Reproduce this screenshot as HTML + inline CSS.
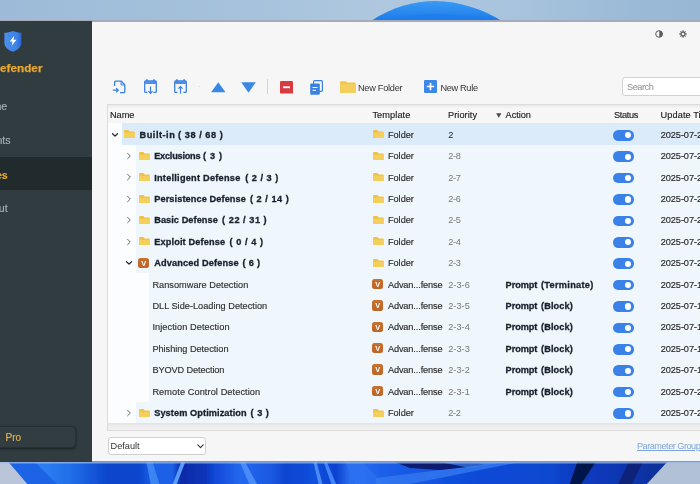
<!DOCTYPE html>
<html><head><meta charset="utf-8"><title>Defender Rules</title>
<style>
*{box-sizing:border-box;margin:0;padding:0}
html,body{width:700px;height:484px;overflow:hidden}
body{position:relative;font-family:"Liberation Sans",sans-serif;font-size:9.2px;color:#333;background:#a8c2da}
#wall{position:absolute;left:0;top:0;width:700px;height:484px}
#app{position:absolute;left:0;top:0;width:700px;height:484px;overflow:hidden;will-change:transform}
#win{position:absolute;left:-2px;top:19.5px;width:710px;height:442.3px;background:#f6f6f6;border-top:2px solid #a6abb9;border-bottom:1px solid #8a96a8}
#side{position:absolute;left:0;top:21px;width:91.5px;height:440.5px;background:#313c40}
.brand{position:absolute;right:49px;top:40.1px;-webkit-text-stroke:0.25px #e8a92e;font-size:11.7px;font-weight:bold;color:#e8a92e;letter-spacing:0.05px;white-space:nowrap}
.nav{position:absolute;left:0;width:91.5px;height:33px;color:#a9b2b5;font-size:10.6px;white-space:nowrap}
.nav span{position:absolute;right:84px;top:11.6px;-webkit-text-stroke:0.15px currentColor}
.nav.on{background:#212a2d;color:#e8a92e;font-weight:bold}
.pro{position:absolute;left:-6px;top:405px;width:81.5px;height:21.5px;border-radius:4px;background:#323d41;border:1px solid #262f33;box-shadow:0 1px 2.5px rgba(0,0,0,.5)}
.pro span{position:absolute;left:10.5px;top:4.5px;font-size:10px;color:#e3b44e;-webkit-text-stroke:0.15px #e3b44e}
.ic{position:absolute;display:block;overflow:visible}
.tb{position:absolute;white-space:nowrap;color:#3a3a3a;font-size:9.2px}
#table{position:absolute;left:106.5px;top:104px;width:600px;height:326.5px;border:1px solid #dcdcdc;background:#fbfdfe}
#thead{position:absolute;left:107.5px;top:104.6px;width:600px;height:18.6px;background:linear-gradient(#e6e6e6 0,#f1f1f1 1.6px,#f7f7f7 4px,#f6f6f6)}
.th{position:absolute;top:5.3px;white-space:nowrap;color:#222;font-size:9.2px}
.rbg{position:absolute;width:600px;height:21.4px}
.t{position:absolute;white-space:nowrap;line-height:10px;font-size:9.2px;z-index:2}
.t.b{font-weight:bold;color:#18212c;-webkit-text-stroke:0.3px #18212c}
.t.leaf{color:#303030;-webkit-text-stroke:0.15px #303030}
.t.tp{color:#2a2a2a;-webkit-text-stroke:0.15px #2a2a2a}
.t.pr{color:#777}
.t.pr.p0{color:#222}
.t.dt{color:#262626;-webkit-text-stroke:0.15px #262626}
.t.th{color:#222;-webkit-text-stroke:0.15px #222}
.t.tbt{color:#333}
.t.ph{color:#8c8c8c}
.t.lk{color:#7ea6dc;text-decoration:underline}
.vic{position:absolute;width:11.1px;height:10.3px;border-radius:2.5px;background:linear-gradient(#c8702f,#bd6428);color:#fff;font-weight:bold;font-size:7.4px;line-height:11.6px;text-align:center}
.tg{position:absolute;width:21px;height:10.6px;border-radius:5.3px;background:#3b82e8}
.tg i{position:absolute;right:2.4px;top:2.2px;width:6.2px;height:6.2px;border-radius:50%;background:#fff}
#scroll{position:absolute;left:107.5px;top:422.8px;width:600px;height:7.2px;background:linear-gradient(#e2e2e2,#ededed 40%,#f0f0f0)}
#sel{position:absolute;left:107.5px;top:437px;width:98px;height:17.5px;border:1px solid #cfcfcf;border-radius:3px;background:#fff}
#sel span.x{position:absolute;left:2.6px;top:3.2px;font-size:9.2px;color:#333}
#search{position:absolute;left:622.2px;top:77.4px;width:100px;height:18.8px;border:1px solid #d2d2d2;border-radius:3px;background:#fff}
#search span{position:absolute;left:4.5px;top:3.6px;color:#8a8a8a;font-size:9.2px}
#pg{position:absolute;left:637px;top:440.5px;font-size:9.2px;color:#7ea6dc;text-decoration:underline;white-space:nowrap}
</style></head><body>
<svg id="wall" width="700" height="484" viewBox="0 0 700 484">
 <defs>
  <linearGradient id="sky" x1="0" x2="1" y1="0" y2="0"><stop offset="0" stop-color="#9dbbd8"/><stop offset=".35" stop-color="#a6c2dc"/><stop offset=".55" stop-color="#afc8e0"/><stop offset=".75" stop-color="#a7c3dd"/><stop offset=".9" stop-color="#9bbad7"/><stop offset="1" stop-color="#98b7d5"/></linearGradient>
  <linearGradient id="dome" x1="0" x2="0" y1="0" y2="1"><stop offset="0" stop-color="#3a9af4"/><stop offset=".6" stop-color="#2888ee"/><stop offset="1" stop-color="#1c7ae8"/></linearGradient>
  <linearGradient id="bl" x1="0" x2="1" y1="0" y2="0">
   <stop offset="0" stop-color="#2b7ef2"/><stop offset=".07" stop-color="#2b7ef2"/><stop offset=".11" stop-color="#1f6ce8"/><stop offset=".16" stop-color="#0c44cc"/><stop offset=".2" stop-color="#0c44cc"/>
   <stop offset=".225" stop-color="#1a60e8"/><stop offset=".25" stop-color="#1a60e8"/><stop offset=".262" stop-color="#0a2aa8"/><stop offset=".295" stop-color="#0c34b8"/><stop offset=".31" stop-color="#1248d8"/><stop offset=".345" stop-color="#2468ee"/><stop offset=".39" stop-color="#1a58e0"/><stop offset=".41" stop-color="#0e44d0"/><stop offset=".45" stop-color="#1250dc"/><stop offset=".48" stop-color="#0c40d0"/><stop offset=".5" stop-color="#2a6ef0"/><stop offset=".56" stop-color="#1a5ce8"/><stop offset=".66" stop-color="#0e4cd8"/><stop offset=".72" stop-color="#0a48d4"/><stop offset=".78" stop-color="#0e48d0"/><stop offset=".815" stop-color="#0c3cc0"/><stop offset=".86" stop-color="#0e38b8"/><stop offset=".93" stop-color="#10329c"/><stop offset="1" stop-color="#10329c"/>
  </linearGradient>
  <filter id="bf" x="-5%" y="-50%" width="110%" height="200%"><feGaussianBlur stdDeviation=".7"/></filter>
 </defs>
 <rect x="0" y="0" width="700" height="24" fill="url(#sky)"/>
 <path d="M371 21C392 7 414 1 435 1C460 1 484 10 502 21Z" fill="url(#dome)"/>
 <path d="M380 21C405 12 470 12 494 21Z" fill="#1d7ce9" opacity=".6"/>
 <g filter="url(#bf)">
  <rect x="-5" y="458" width="710" height="30" fill="url(#bl)"/>
  <polygon points="146,460 152,460 160,486 151,486" fill="#3a84f4"/>
  <polygon points="182,460 186,460 176,486 172,486" fill="#5a9cf8"/>
  <polygon points="239,460 244,460 258,486 250,486" fill="#4a8cf8"/>
  <polygon points="313,460 316,460 323,486 319,486" fill="#4a8cf8"/>
  <polygon points="323,460 326,460 337,486 332,486" fill="#3f84f6"/>
  <polygon points="344,460 362,460 384,486 356,486" fill="#2a70f0" opacity=".8"/>
  <polygon points="376,478 480,465 520,462 470,472 400,486 376,486" fill="#3478f0" opacity=".8"/>
  <polygon points="392,461 474,461 484,465 440,470 410,468" fill="#081c70"/>
  <polygon points="440,462 520,460 470,468" fill="#3f80f0" opacity=".7"/>
  <polygon points="578,460 597,460 580,486 569,486" fill="#06184c"/>
  <polygon points="630,460 644,460 631,486 617,486" fill="#0a2478"/>
  <polygon points="4,458 31,458 59,486 28,486" fill="#1c64e6"/>
  <polygon points="-5,458 5,458 29,486 -5,486" fill="#bac5da"/>
  <polygon points="669,460 705,460 705,486 645,486" fill="#b2c2d6"/>
 </g>
 <rect x="0" y="461.500" width="700" height="2" fill="#9fbbe6" opacity=".75"/>
</svg>
<div id="app">
<div id="win"></div>
<div id="side">
 <svg class="ic" style="left:4.3px;top:10.1px" width="18" height="21" viewBox="0 0 18 21"><defs><linearGradient id="sh" x1="0" x2="1" y1="0" y2="0"><stop offset="0" stop-color="#4a90ee"/><stop offset=".75" stop-color="#3b82e6"/><stop offset="1" stop-color="#2a62d0"/></linearGradient></defs><path d="M8.900 0C6 1.200 3 1.800 .4 1.800V12C.4 16 4 19 8.900 20.800C13.800 19 17.400 16 17.400 12V1.800C14.800 1.800 11.800 1.200 8.900 0Z" fill="url(#sh)"/><path d="M10.200 4.700L5.700 10.500H8.500L7.700 14.800L12.500 8.700H9.500Z" fill="#fff"/></svg>
 <div class="brand">Defender</div>
 <div class="nav" style="top:67.500px"><span style="right:84.300px">Home</span></div>
 <div class="nav" style="top:101.500px"><span style="right:80.900px">Events</span></div>
 <div class="nav on" style="top:136.200px;height:32.500px"><span style="right:83.800px">Rules</span></div>
 <div class="nav" style="top:169.500px"><span style="right:83.800px">About</span></div>
 <div class="pro"><span>Pro</span></div>
</div>

<!-- toolbar -->
<div id="toolbar">
<!-- import file -->
<svg class="ic" style="left:112px;top:80px" width="14" height="14" viewBox="0 0 14 14"><path d="M2.600 6V2Q2.600 1.200 3.400 1.200H9.200L12.800 4.800V11.800Q12.800 12.600 12 12.600H8" fill="none" stroke="#3b80e0" stroke-width="1.300"/><path d="M9.100 1.400V4.900H12.600" fill="none" stroke="#3b80e0" stroke-width="1"/><path d="M.8 10.200H6.200M4.100 8.100L6.200 10.200L4.100 12.300" fill="none" stroke="#3b80e0" stroke-width="1.300"/></svg>
<!-- calendar down -->
<svg class="ic" style="left:144.2px;top:78.600px" width="13" height="15" viewBox="0 0 13 15"><path d="M.7 3Q.7 2 1.700 2H11.300Q12.300 2 12.300 3V12.400Q12.300 13.400 11.300 13.400H9.400M3.400 13.400H1.700Q.7 13.400 .7 12.400V3" fill="none" stroke="#3b80e0" stroke-width="1.300"/><rect x=".7" y="2" width="11.600" height="3" fill="#4d8ee8"/><path d="M2.900 .2V2.600M10.100 .2V2.600" stroke="#3b80e0" stroke-width="1.500"/><path d="M6.500 7.400V14.300M4.400 12.200L6.500 14.300L8.600 12.200" fill="none" stroke="#3b80e0" stroke-width="1.200"/></svg>
<!-- calendar up -->
<svg class="ic" style="left:174.4px;top:78.600px" width="13" height="15" viewBox="0 0 13 15"><path d="M.7 3Q.7 2 1.700 2H11.300Q12.300 2 12.300 3V12.400Q12.300 13.400 11.300 13.400H9.400M3.400 13.400H1.700Q.7 13.400 .7 12.400V3" fill="none" stroke="#3b80e0" stroke-width="1.300"/><rect x=".7" y="2" width="11.600" height="3" fill="#4d8ee8"/><path d="M2.900 .2V2.600M10.100 .2V2.600" stroke="#3b80e0" stroke-width="1.500"/><path d="M6.500 14.800V7.600M4.400 9.700L6.500 7.600L8.600 9.700" fill="none" stroke="#3b80e0" stroke-width="1.200"/></svg>
<div style="position:absolute;left:198.500px;top:85.500px;width:1px;height:1.500px;background:#ddd"></div>
<!-- up / down triangles -->
<svg class="ic" style="left:211px;top:81.500px" width="15" height="11" viewBox="0 0 15 11"><path d="M7.300 .2L14.500 10.200H.1Z" fill="#3a88e6"/></svg>
<svg class="ic" style="left:241px;top:81.500px" width="15" height="11" viewBox="0 0 15 11"><path d="M.2 .3H14.800L7.500 10.800Z" fill="#3a88e6"/></svg>
<div style="position:absolute;left:267.300px;top:78.500px;width:1px;height:15.500px;background:#d4d4d4"></div>
<!-- red minus -->
<svg class="ic" style="left:279.900px;top:80.800px" width="13" height="13" viewBox="0 0 13 13"><rect x="0" y="0" width="13" height="12.600" rx="1.200" fill="#d93a40"/><rect x="3" y="5.300" width="7" height="1.900" fill="#fff"/></svg>
<!-- copy -->
<svg class="ic" style="left:310px;top:79.500px" width="13" height="15" viewBox="0 0 13 15"><rect x="3.600" y=".7" width="8.800" height="10.600" rx="1" fill="#f6f6f6" stroke="#3b82e0" stroke-width="1.200"/><rect x=".2" y="3.400" width="9.600" height="11.300" rx="1.200" fill="#3b82e0"/><path d="M2.500 7.500H7.500M2.500 10.300H6" stroke="#fff" stroke-width="1"/></svg>
<!-- new folder -->
<svg class="ic" style="left:340px;top:80.700px" width="16" height="12.300" viewBox="0 0 16 13" preserveAspectRatio="none"><path d="M1 .2h4.800l1.400 1.500h7.600q.9 0 .9.900v9.300q0 .9-.9.900H1q-.9 0-.9-.9V1.100q0-.9.900-.9z" fill="#f0c648"/><path d="M.1 3.300h15.600v8.600q0 .9-.9.900H1q-.9 0-.9-.9z" fill="#f4cf5e"/></svg>
<!-- new rule -->
<svg class="ic" style="left:424px;top:80px" width="13" height="13" viewBox="0 0 13 13"><rect width="13" height="13" rx="1.300" fill="#3b86e6"/><path d="M6.500 2.800V10.200M2.800 6.500H10.200" stroke="#fff" stroke-width="1.700"/></svg>
<span class="t tbt" style="left:358.0px;top:82.81px;letter-spacing:-0.265px;">New Folder</span>
<span class="t tbt" style="left:440.4px;top:82.81px;letter-spacing:-0.318px;">New Rule</span>
</div>
<!-- top-right icons -->
<svg class="ic" style="left:655.100px;top:29.900px" width="8" height="8" viewBox="0 0 8 8"><circle cx="4" cy="4" r="3.300" fill="#f4f4f4" stroke="#5c5c5c" stroke-width="1"/><path d="M4.300 .7A3.300 3.300 0 0 1 4.300 7.300Z" fill="#5c5c5c"/></svg>
<svg class="ic" style="left:678.600px;top:29.900px" width="8" height="8" viewBox="0 0 8 8"><g stroke="#666" stroke-width="1.300"><path d="M4 .3V7.700M.3 4H7.700M1.400 1.400L6.600 6.600M6.600 1.400L1.400 6.600"/></g><circle cx="4" cy="4" r="2.400" fill="#5c5c5c"/><circle cx="4" cy="4" r="1.300" fill="#f6f6f6"/></svg>
<div id="search"></div>
<span class="t ph" style="left:627.0px;top:82.21px;letter-spacing:-0.465px;">Search</span>

<div id="table"></div>
<div id="thead"></div>
<svg class="ic" style="left:496.200px;top:112.700px;z-index:3" width="5.600" height="4.800" viewBox="0 0 8 6" preserveAspectRatio="none"><path d="M.2 .2H7.800L4 5.800Z" fill="#4a4a4a"/></svg>
<span class="t th" style="left:109.9px;top:110.11px;letter-spacing:0.028px;">Name</span>
<span class="t th" style="left:372.4px;top:110.11px;letter-spacing:0.103px;">Template</span>
<span class="t th" style="left:448.0px;top:110.11px;letter-spacing:0.058px;">Priority</span>
<span class="t th" style="left:505.6px;top:110.11px;letter-spacing:-0.029px;">Action</span>
<span class="t th" style="left:614.0px;top:110.11px;letter-spacing:-0.329px;">Status</span>
<span class="t th" style="left:660.6px;top:110.11px;letter-spacing:0.08px;">Update Time</span>
<div class="rbg" style="left:121.8px;top:123.1px;height:21.9px;background:#dcebfa"></div>
<svg class="ic" style="left:110.6px;top:131.85px" width="8" height="6" viewBox="0 0 8 6"><path d="M1.500 1.700L4 4.100L6.500 1.700" fill="none" stroke="#222" stroke-width="1.200" stroke-linecap="round" stroke-linejoin="round"/></svg>
<svg class="ic" style="left:124.1px;top:130.35px" width="10.800" height="8.400" viewBox="0 0 11 9" preserveAspectRatio="none"><path d="M.9 .1H4.600L5.700 1.500H10.100Q10.900 1.500 10.900 2.300V7.900Q10.900 8.700 10.100 8.700H.9Q.1 8.700 .1 7.900V.9Q.1 .1 .9 .1Z" fill="#efc246"/><path d="M.1 2.900H10.900V7.900Q10.900 8.700 10.100 8.700H.9Q.1 8.700 .1 7.900Z" fill="#f5cf5c"/></svg>
<span class="t b" style="left:139.6px;top:129.81px;letter-spacing:0.508px;">Built-in</span>
<span class="t b" style="left:178.1px;top:129.81px;letter-spacing:0.537px;">( 38 / 68 )</span>
<svg class="ic" style="left:372.5px;top:130.35px" width="10.800" height="8.400" viewBox="0 0 11 9" preserveAspectRatio="none"><path d="M.9 .1H4.600L5.700 1.500H10.100Q10.900 1.500 10.900 2.300V7.900Q10.900 8.700 10.100 8.700H.9Q.1 8.700 .1 7.900V.9Q.1 .1 .9 .1Z" fill="#efc246"/><path d="M.1 2.900H10.900V7.900Q10.900 8.700 10.100 8.700H.9Q.1 8.700 .1 7.900Z" fill="#f5cf5c"/></svg>
<span class="t tp" style="left:387.9px;top:129.81px;letter-spacing:-0.009px;">Folder</span>
<span class="t pr p0" style="left:448.2px;top:129.81px;letter-spacing:0.075px;">2</span>
<div class="tg" style="left:612.7px;top:129.95px"><i></i></div>
<span class="t dt" style="left:660.8px;top:129.81px;letter-spacing:-0.086px;">2025-07-2</span>
<div class="rbg" style="left:136.4px;top:145.00px;background:#eff6fc"></div>
<svg class="ic" style="left:125.6px;top:152.05px" width="6" height="8" viewBox="0 0 6 8"><path d="M1.600 1.300L4.300 4L1.600 6.700" fill="none" stroke="#6a6a6a" stroke-width="1" stroke-linecap="round" stroke-linejoin="round"/></svg>
<svg class="ic" style="left:138.6px;top:151.75px" width="10.800" height="8.400" viewBox="0 0 11 9" preserveAspectRatio="none"><path d="M.9 .1H4.600L5.700 1.500H10.100Q10.900 1.500 10.900 2.300V7.900Q10.900 8.700 10.100 8.700H.9Q.1 8.700 .1 7.900V.9Q.1 .1 .9 .1Z" fill="#efc246"/><path d="M.1 2.900H10.900V7.900Q10.900 8.700 10.100 8.700H.9Q.1 8.700 .1 7.900Z" fill="#f5cf5c"/></svg>
<span class="t b" style="left:154.2px;top:151.21px;letter-spacing:-0.235px;">Exclusions</span>
<span class="t b" style="left:202.9px;top:151.21px;letter-spacing:0.714px;">( 3 )</span>
<svg class="ic" style="left:372.5px;top:151.75px" width="10.800" height="8.400" viewBox="0 0 11 9" preserveAspectRatio="none"><path d="M.9 .1H4.600L5.700 1.500H10.100Q10.900 1.500 10.900 2.300V7.900Q10.900 8.700 10.100 8.700H.9Q.1 8.700 .1 7.900V.9Q.1 .1 .9 .1Z" fill="#efc246"/><path d="M.1 2.900H10.900V7.900Q10.900 8.700 10.100 8.700H.9Q.1 8.700 .1 7.900Z" fill="#f5cf5c"/></svg>
<span class="t tp" style="left:387.9px;top:151.21px;letter-spacing:-0.009px;">Folder</span>
<span class="t pr" style="left:448.2px;top:151.21px;letter-spacing:-0.291px;">2-8</span>
<div class="tg" style="left:612.7px;top:151.35px"><i></i></div>
<span class="t dt" style="left:660.8px;top:151.21px;letter-spacing:-0.086px;">2025-07-2</span>
<div class="rbg" style="left:136.4px;top:166.40px;background:#eff6fc"></div>
<svg class="ic" style="left:125.6px;top:173.45px" width="6" height="8" viewBox="0 0 6 8"><path d="M1.600 1.300L4.300 4L1.600 6.700" fill="none" stroke="#6a6a6a" stroke-width="1" stroke-linecap="round" stroke-linejoin="round"/></svg>
<svg class="ic" style="left:138.6px;top:173.15px" width="10.800" height="8.400" viewBox="0 0 11 9" preserveAspectRatio="none"><path d="M.9 .1H4.600L5.700 1.500H10.100Q10.900 1.500 10.900 2.300V7.900Q10.900 8.700 10.100 8.700H.9Q.1 8.700 .1 7.900V.9Q.1 .1 .9 .1Z" fill="#efc246"/><path d="M.1 2.900H10.900V7.900Q10.900 8.700 10.100 8.700H.9Q.1 8.700 .1 7.900Z" fill="#f5cf5c"/></svg>
<span class="t b" style="left:154.2px;top:172.61px;letter-spacing:0.245px;">Intelligent Defense</span>
<span class="t b" style="left:245.2px;top:172.61px;letter-spacing:0.499px;">( 2 / 3 )</span>
<svg class="ic" style="left:372.5px;top:173.15px" width="10.800" height="8.400" viewBox="0 0 11 9" preserveAspectRatio="none"><path d="M.9 .1H4.600L5.700 1.500H10.100Q10.900 1.500 10.900 2.300V7.900Q10.900 8.700 10.100 8.700H.9Q.1 8.700 .1 7.900V.9Q.1 .1 .9 .1Z" fill="#efc246"/><path d="M.1 2.900H10.900V7.900Q10.900 8.700 10.100 8.700H.9Q.1 8.700 .1 7.900Z" fill="#f5cf5c"/></svg>
<span class="t tp" style="left:387.9px;top:172.61px;letter-spacing:-0.009px;">Folder</span>
<span class="t pr" style="left:448.2px;top:172.61px;letter-spacing:-0.291px;">2-7</span>
<div class="tg" style="left:612.7px;top:172.75px"><i></i></div>
<span class="t dt" style="left:660.8px;top:172.61px;letter-spacing:-0.086px;">2025-07-2</span>
<div class="rbg" style="left:136.4px;top:187.80px;background:#eff6fc"></div>
<svg class="ic" style="left:125.6px;top:194.85px" width="6" height="8" viewBox="0 0 6 8"><path d="M1.600 1.300L4.300 4L1.600 6.700" fill="none" stroke="#6a6a6a" stroke-width="1" stroke-linecap="round" stroke-linejoin="round"/></svg>
<svg class="ic" style="left:138.6px;top:194.55px" width="10.800" height="8.400" viewBox="0 0 11 9" preserveAspectRatio="none"><path d="M.9 .1H4.600L5.700 1.500H10.100Q10.900 1.500 10.900 2.300V7.900Q10.900 8.700 10.100 8.700H.9Q.1 8.700 .1 7.900V.9Q.1 .1 .9 .1Z" fill="#efc246"/><path d="M.1 2.900H10.900V7.900Q10.900 8.700 10.100 8.700H.9Q.1 8.700 .1 7.900Z" fill="#f5cf5c"/></svg>
<span class="t b" style="left:154.2px;top:194.01px;letter-spacing:0.101px;">Persistence Defense</span>
<span class="t b" style="left:249.9px;top:194.01px;letter-spacing:0.531px;">( 2 / 14 )</span>
<svg class="ic" style="left:372.5px;top:194.55px" width="10.800" height="8.400" viewBox="0 0 11 9" preserveAspectRatio="none"><path d="M.9 .1H4.600L5.700 1.500H10.100Q10.900 1.500 10.900 2.300V7.900Q10.900 8.700 10.100 8.700H.9Q.1 8.700 .1 7.900V.9Q.1 .1 .9 .1Z" fill="#efc246"/><path d="M.1 2.900H10.900V7.900Q10.900 8.700 10.100 8.700H.9Q.1 8.700 .1 7.900Z" fill="#f5cf5c"/></svg>
<span class="t tp" style="left:387.9px;top:194.01px;letter-spacing:-0.009px;">Folder</span>
<span class="t pr" style="left:448.2px;top:194.01px;letter-spacing:-0.291px;">2-6</span>
<div class="tg" style="left:612.7px;top:194.15px"><i></i></div>
<span class="t dt" style="left:660.8px;top:194.01px;letter-spacing:-0.086px;">2025-07-2</span>
<div class="rbg" style="left:136.4px;top:209.20px;background:#eff6fc"></div>
<svg class="ic" style="left:125.6px;top:216.25px" width="6" height="8" viewBox="0 0 6 8"><path d="M1.600 1.300L4.300 4L1.600 6.700" fill="none" stroke="#6a6a6a" stroke-width="1" stroke-linecap="round" stroke-linejoin="round"/></svg>
<svg class="ic" style="left:138.6px;top:215.95px" width="10.800" height="8.400" viewBox="0 0 11 9" preserveAspectRatio="none"><path d="M.9 .1H4.600L5.700 1.500H10.100Q10.900 1.500 10.900 2.300V7.900Q10.900 8.700 10.100 8.700H.9Q.1 8.700 .1 7.900V.9Q.1 .1 .9 .1Z" fill="#efc246"/><path d="M.1 2.900H10.900V7.900Q10.900 8.700 10.100 8.700H.9Q.1 8.700 .1 7.900Z" fill="#f5cf5c"/></svg>
<span class="t b" style="left:154.2px;top:215.41px;letter-spacing:0.064px;">Basic Defense</span>
<span class="t b" style="left:222.1px;top:215.41px;letter-spacing:0.527px;">( 22 / 31 )</span>
<svg class="ic" style="left:372.5px;top:215.95px" width="10.800" height="8.400" viewBox="0 0 11 9" preserveAspectRatio="none"><path d="M.9 .1H4.600L5.700 1.500H10.100Q10.900 1.500 10.900 2.300V7.900Q10.900 8.700 10.100 8.700H.9Q.1 8.700 .1 7.900V.9Q.1 .1 .9 .1Z" fill="#efc246"/><path d="M.1 2.900H10.900V7.900Q10.900 8.700 10.100 8.700H.9Q.1 8.700 .1 7.900Z" fill="#f5cf5c"/></svg>
<span class="t tp" style="left:387.9px;top:215.41px;letter-spacing:-0.009px;">Folder</span>
<span class="t pr" style="left:448.2px;top:215.41px;letter-spacing:-0.291px;">2-5</span>
<div class="tg" style="left:612.7px;top:215.55px"><i></i></div>
<span class="t dt" style="left:660.8px;top:215.41px;letter-spacing:-0.086px;">2025-07-2</span>
<div class="rbg" style="left:136.4px;top:230.60px;background:#eff6fc"></div>
<svg class="ic" style="left:125.6px;top:237.65px" width="6" height="8" viewBox="0 0 6 8"><path d="M1.600 1.300L4.300 4L1.600 6.700" fill="none" stroke="#6a6a6a" stroke-width="1" stroke-linecap="round" stroke-linejoin="round"/></svg>
<svg class="ic" style="left:138.6px;top:237.35px" width="10.800" height="8.400" viewBox="0 0 11 9" preserveAspectRatio="none"><path d="M.9 .1H4.600L5.700 1.500H10.100Q10.900 1.500 10.900 2.300V7.900Q10.900 8.700 10.100 8.700H.9Q.1 8.700 .1 7.900V.9Q.1 .1 .9 .1Z" fill="#efc246"/><path d="M.1 2.900H10.900V7.900Q10.900 8.700 10.100 8.700H.9Q.1 8.700 .1 7.900Z" fill="#f5cf5c"/></svg>
<span class="t b" style="left:154.2px;top:236.81px;letter-spacing:0.14px;">Exploit Defense</span>
<span class="t b" style="left:229.4px;top:236.81px;letter-spacing:0.574px;">( 0 / 4 )</span>
<svg class="ic" style="left:372.5px;top:237.35px" width="10.800" height="8.400" viewBox="0 0 11 9" preserveAspectRatio="none"><path d="M.9 .1H4.600L5.700 1.500H10.100Q10.900 1.500 10.900 2.300V7.900Q10.900 8.700 10.100 8.700H.9Q.1 8.700 .1 7.900V.9Q.1 .1 .9 .1Z" fill="#efc246"/><path d="M.1 2.900H10.900V7.900Q10.900 8.700 10.100 8.700H.9Q.1 8.700 .1 7.900Z" fill="#f5cf5c"/></svg>
<span class="t tp" style="left:387.9px;top:236.81px;letter-spacing:-0.009px;">Folder</span>
<span class="t pr" style="left:448.2px;top:236.81px;letter-spacing:-0.291px;">2-4</span>
<div class="tg" style="left:612.7px;top:236.95px"><i></i></div>
<span class="t dt" style="left:660.8px;top:236.81px;letter-spacing:-0.086px;">2025-07-2</span>
<div class="rbg" style="left:136.4px;top:252.00px;background:#eff6fc"></div>
<svg class="ic" style="left:124.7px;top:260.25px" width="8" height="6" viewBox="0 0 8 6"><path d="M1.500 1.700L4 4.100L6.500 1.700" fill="none" stroke="#222" stroke-width="1.200" stroke-linecap="round" stroke-linejoin="round"/></svg>
<div class="vic" style="left:138.2px;top:257.55px">V</div>
<span class="t b" style="left:154.2px;top:258.21px;letter-spacing:0.145px;">Advanced Defense</span>
<span class="t b" style="left:242.6px;top:258.21px;letter-spacing:0.289px;">( 6 )</span>
<svg class="ic" style="left:372.5px;top:258.75px" width="10.800" height="8.400" viewBox="0 0 11 9" preserveAspectRatio="none"><path d="M.9 .1H4.600L5.700 1.500H10.100Q10.900 1.500 10.900 2.300V7.900Q10.900 8.700 10.100 8.700H.9Q.1 8.700 .1 7.900V.9Q.1 .1 .9 .1Z" fill="#efc246"/><path d="M.1 2.900H10.900V7.900Q10.900 8.700 10.100 8.700H.9Q.1 8.700 .1 7.900Z" fill="#f5cf5c"/></svg>
<span class="t tp" style="left:387.9px;top:258.21px;letter-spacing:-0.009px;">Folder</span>
<span class="t pr" style="left:448.2px;top:258.21px;letter-spacing:-0.291px;">2-3</span>
<div class="tg" style="left:612.7px;top:258.35px"><i></i></div>
<span class="t dt" style="left:660.8px;top:258.21px;letter-spacing:-0.086px;">2025-07-2</span>
<div class="rbg" style="left:149.4px;top:273.40px;background:#eff6fc"></div>
<span class="t leaf" style="left:152.4px;top:279.61px;letter-spacing:0.021px;">Ransomware Detection</span>
<div class="vic" style="left:372.2px;top:278.85px">V</div>
<span class="t tp" style="left:387.9px;top:279.61px;letter-spacing:-0.116px;">Advan...fense</span>
<span class="t pr" style="left:448.2px;top:279.61px;letter-spacing:0.037px;">2-3-6</span>
<span class="t b" style="left:505.6px;top:279.61px;letter-spacing:-0.071px;">Prompt</span>
<span class="t b" style="left:541.0px;top:279.61px;letter-spacing:0.294px;">(Terminate)</span>
<div class="tg" style="left:612.7px;top:279.75px"><i></i></div>
<span class="t dt" style="left:660.8px;top:279.61px;letter-spacing:-0.086px;">2025-07-1</span>
<div class="rbg" style="left:149.4px;top:294.80px;background:#eff6fc"></div>
<span class="t leaf" style="left:152.4px;top:301.01px;letter-spacing:0.008px;">DLL Side-Loading Detection</span>
<div class="vic" style="left:372.2px;top:300.25px">V</div>
<span class="t tp" style="left:387.9px;top:301.01px;letter-spacing:-0.116px;">Advan...fense</span>
<span class="t pr" style="left:448.2px;top:301.01px;letter-spacing:0.037px;">2-3-5</span>
<span class="t b" style="left:505.6px;top:301.01px;letter-spacing:-0.071px;">Prompt</span>
<span class="t b" style="left:541.0px;top:301.01px;letter-spacing:0.11px;">(Block)</span>
<div class="tg" style="left:612.7px;top:301.15px"><i></i></div>
<span class="t dt" style="left:660.8px;top:301.01px;letter-spacing:-0.086px;">2025-07-1</span>
<div class="rbg" style="left:149.4px;top:316.20px;background:#eff6fc"></div>
<span class="t leaf" style="left:152.4px;top:322.41px;letter-spacing:0.084px;">Injection Detection</span>
<div class="vic" style="left:372.2px;top:321.65px">V</div>
<span class="t tp" style="left:387.9px;top:322.41px;letter-spacing:-0.116px;">Advan...fense</span>
<span class="t pr" style="left:448.2px;top:322.41px;letter-spacing:0.037px;">2-3-4</span>
<span class="t b" style="left:505.6px;top:322.41px;letter-spacing:-0.071px;">Prompt</span>
<span class="t b" style="left:541.0px;top:322.41px;letter-spacing:0.11px;">(Block)</span>
<div class="tg" style="left:612.7px;top:322.55px"><i></i></div>
<span class="t dt" style="left:660.8px;top:322.41px;letter-spacing:-0.086px;">2025-07-1</span>
<div class="rbg" style="left:149.4px;top:337.60px;background:#eff6fc"></div>
<span class="t leaf" style="left:152.4px;top:343.81px;letter-spacing:-0.03px;">Phishing Detection</span>
<div class="vic" style="left:372.2px;top:343.05px">V</div>
<span class="t tp" style="left:387.9px;top:343.81px;letter-spacing:-0.116px;">Advan...fense</span>
<span class="t pr" style="left:448.2px;top:343.81px;letter-spacing:0.037px;">2-3-3</span>
<span class="t b" style="left:505.6px;top:343.81px;letter-spacing:-0.071px;">Prompt</span>
<span class="t b" style="left:541.0px;top:343.81px;letter-spacing:0.11px;">(Block)</span>
<div class="tg" style="left:612.7px;top:343.95px"><i></i></div>
<span class="t dt" style="left:660.8px;top:343.81px;letter-spacing:-0.086px;">2025-07-1</span>
<div class="rbg" style="left:149.4px;top:359.00px;background:#eff6fc"></div>
<span class="t leaf" style="left:152.4px;top:365.21px;letter-spacing:-0.103px;">BYOVD Detection</span>
<div class="vic" style="left:372.2px;top:364.45px">V</div>
<span class="t tp" style="left:387.9px;top:365.21px;letter-spacing:-0.116px;">Advan...fense</span>
<span class="t pr" style="left:448.2px;top:365.21px;letter-spacing:0.037px;">2-3-2</span>
<span class="t b" style="left:505.6px;top:365.21px;letter-spacing:-0.071px;">Prompt</span>
<span class="t b" style="left:541.0px;top:365.21px;letter-spacing:0.11px;">(Block)</span>
<div class="tg" style="left:612.7px;top:365.35px"><i></i></div>
<span class="t dt" style="left:660.8px;top:365.21px;letter-spacing:-0.086px;">2025-07-1</span>
<div class="rbg" style="left:149.4px;top:380.40px;background:#eff6fc"></div>
<span class="t leaf" style="left:152.4px;top:386.61px;letter-spacing:0.09px;">Remote Control Detection</span>
<div class="vic" style="left:372.2px;top:385.85px">V</div>
<span class="t tp" style="left:387.9px;top:386.61px;letter-spacing:-0.116px;">Advan...fense</span>
<span class="t pr" style="left:448.2px;top:386.61px;letter-spacing:0.037px;">2-3-1</span>
<span class="t b" style="left:505.6px;top:386.61px;letter-spacing:-0.071px;">Prompt</span>
<span class="t b" style="left:541.0px;top:386.61px;letter-spacing:0.11px;">(Block)</span>
<div class="tg" style="left:612.7px;top:386.75px"><i></i></div>
<span class="t dt" style="left:660.8px;top:386.61px;letter-spacing:-0.086px;">2025-07-2</span>
<div class="rbg" style="left:136.4px;top:401.80px;background:#eff6fc"></div>
<svg class="ic" style="left:125.6px;top:408.85px" width="6" height="8" viewBox="0 0 6 8"><path d="M1.600 1.300L4.300 4L1.600 6.700" fill="none" stroke="#6a6a6a" stroke-width="1" stroke-linecap="round" stroke-linejoin="round"/></svg>
<svg class="ic" style="left:138.6px;top:408.55px" width="10.800" height="8.400" viewBox="0 0 11 9" preserveAspectRatio="none"><path d="M.9 .1H4.600L5.700 1.500H10.100Q10.900 1.500 10.900 2.300V7.900Q10.900 8.700 10.100 8.700H.9Q.1 8.700 .1 7.900V.9Q.1 .1 .9 .1Z" fill="#efc246"/><path d="M.1 2.900H10.900V7.900Q10.900 8.700 10.100 8.700H.9Q.1 8.700 .1 7.900Z" fill="#f5cf5c"/></svg>
<span class="t b" style="left:154.2px;top:408.01px;letter-spacing:0.09px;">System Optimization</span>
<span class="t b" style="left:250.6px;top:408.01px;letter-spacing:0.464px;">( 3 )</span>
<svg class="ic" style="left:372.5px;top:408.55px" width="10.800" height="8.400" viewBox="0 0 11 9" preserveAspectRatio="none"><path d="M.9 .1H4.600L5.700 1.500H10.100Q10.900 1.500 10.900 2.300V7.900Q10.900 8.700 10.100 8.700H.9Q.1 8.700 .1 7.900V.9Q.1 .1 .9 .1Z" fill="#efc246"/><path d="M.1 2.900H10.900V7.900Q10.900 8.700 10.100 8.700H.9Q.1 8.700 .1 7.900Z" fill="#f5cf5c"/></svg>
<span class="t tp" style="left:387.9px;top:408.01px;letter-spacing:-0.009px;">Folder</span>
<span class="t pr" style="left:448.2px;top:408.01px;letter-spacing:-0.291px;">2-2</span>
<div class="tg" style="left:612.7px;top:408.15px"><i></i></div>
<span class="t dt" style="left:660.8px;top:408.01px;letter-spacing:-0.086px;">2025-07-2</span>
<div id="scroll"></div>
<div id="sel">
 <svg class="ic" style="left:88.500px;top:6.300px" width="7" height="5" viewBox="0 0 7 5"><path d="M.8 .8L3.500 3.600L6.200 .8" fill="none" stroke="#333" stroke-width="1.100" stroke-linecap="round" stroke-linejoin="round"/></svg>
</div>
<span class="t" style="left:110.6px;top:440.81px;letter-spacing:-0.021px;">Default</span><span class="t lk" style="left:637.0px;top:441.41px;letter-spacing:-0.513px;">Parameter Group</span>
</div>
</body></html>
